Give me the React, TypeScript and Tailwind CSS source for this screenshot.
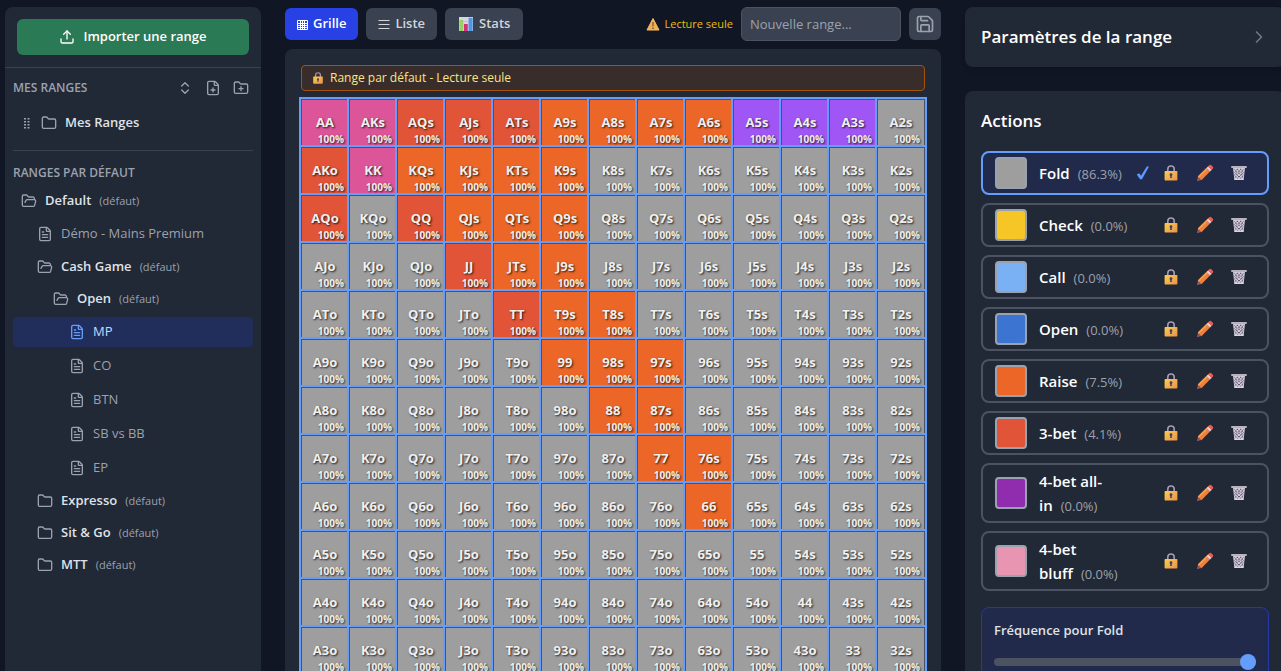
import type { ReactNode } from "react";
import {
    ChevronRight,
    ChevronsUpDown,
    FilePlus,
    FileText,
    Folder,
    FolderOpen,
    FolderPlus,
    Save,
    Upload,
} from "lucide-react";

type TreeItem = {
    name: string;
    level: number;
    kind: "open" | "closed" | "file";
    active?: boolean;
};

type Action = {
    name: string;
    percent: string;
    color: string;
    selected?: boolean;
};

const TREE: TreeItem[] = [
    { name: "Default", level: 0, kind: "open" },
    { name: "Démo - Mains Premium", level: 1, kind: "file" },
    { name: "Cash Game", level: 1, kind: "open" },
    { name: "Open", level: 2, kind: "open" },
    { name: "MP", level: 3, kind: "file", active: true },
    { name: "CO", level: 3, kind: "file" },
    { name: "BTN", level: 3, kind: "file" },
    { name: "SB vs BB", level: 3, kind: "file" },
    { name: "EP", level: 3, kind: "file" },
    { name: "Expresso", level: 1, kind: "closed" },
    { name: "Sit & Go", level: 1, kind: "closed" },
    { name: "MTT", level: 1, kind: "closed" },
];

const INDENT = ["pl-2", "pl-6", "pl-10", "pl-14"];

const ACTIONS: Action[] = [
    { name: "Fold", percent: "86.3%", color: "bg-[#9e9e9e]", selected: true },
    { name: "Check", percent: "0.0%", color: "bg-[#f6c627]" },
    { name: "Call", percent: "0.0%", color: "bg-[#7ab1f5]" },
    { name: "Open", percent: "0.0%", color: "bg-[#3b74d1]" },
    { name: "Raise", percent: "7.5%", color: "bg-[#ec6727]" },
    { name: "3-bet", percent: "4.1%", color: "bg-[#e15438]" },
    { name: "4-bet all-in", percent: "0.0%", color: "bg-[#902daf]" },
    { name: "4-bet bluff", percent: "0.0%", color: "bg-[#e895b2]" },
];

const RANKS = ["A", "K", "Q", "J", "T", "9", "8", "7", "6", "5", "4", "3", "2"];

// One letter per hand: k = 4-bet, t = 3-bet, r = raise, v = call 3-bet, f = fold
const RANGE = [
    "kktttrrrrvvvf",
    "tkrrrrfffffff",
    "tftrrrfffffff",
    "ffftrrfffffff",
    "fffftrrffffff",
    "fffffrrrfffff",
    "ffffffrrfffff",
    "fffffffrrffff",
    "ffffffffrffff",
    "fffffffffffff",
    "fffffffffffff",
    "fffffffffffff",
    "fffffffffffff",
];

const CELL_COLORS: Record<string, string> = {
    k: "bg-[#db5598]",
    t: "bg-[#e15438]",
    r: "bg-[#ec6727]",
    v: "bg-[#a056f5]",
    f: "bg-[#9e9e9e]",
};

function handName(row: number, col: number) {
    if (row === col) return RANKS[row] + RANKS[row];
    return row < col ? `${RANKS[row]}${RANKS[col]}s` : `${RANKS[col]}${RANKS[row]}o`;
}

function LockIcon({ size = 16 }: { size?: number }) {
    return (
        <svg width={size} height={size} viewBox="0 0 16 16" aria-hidden="true" className="shrink-0">
            <defs>
                <linearGradient id="lockBody" x1="0" y1="0" x2="1" y2="1">
                    <stop offset="0" stopColor="#f9cf4f" />
                    <stop offset="1" stopColor="#e9914b" />
                </linearGradient>
            </defs>
            <path d="M4.8 7V4.2a3.2 3.2 0 0 1 6.4 0V7" fill="none" stroke="#a59bb3" strokeWidth="1.6" />
            <rect x="1.6" y="6" width="12.8" height="9.6" rx="0.8" fill="url(#lockBody)" />
            <circle cx="8" cy="9.7" r="1.4" fill="#433b6b" />
            <path d="M7.4 10h1.2l.3 3H7.1z" fill="#433b6b" />
        </svg>
    );
}

function PencilIcon() {
    return (
        <svg width="18" height="18" viewBox="0 0 18 18" aria-hidden="true">
            <path d="M.8 17.2l1.2-4.6 3.4 3.4z" fill="#8a5a66" />
            <path d="M1.8 12.6L10.4 4l3.6 3.6-8.6 8.6z" fill="#ec8040" />
            <path d="M1.8 12.6L10.4 4l1.2 1.2L3 13.8z" fill="#f6a04e" />
            <path d="M10.4 4l1.8-1.8 3.6 3.6L14 7.6z" fill="#ded4e6" />
            <path d="M12 2.4l1.2-1.2a1.4 1.4 0 0 1 2 0l1.6 1.6a1.4 1.4 0 0 1 0 2L15.6 6z" fill="#ee5f51" />
        </svg>
    );
}

function TrashIcon() {
    return (
        <svg width="16" height="16" viewBox="0 0 18 18" aria-hidden="true">
            <path d="M2.2 2.5h13.6l-1.6 14H3.8z" fill="#d2ccda" />
            <path
                d="M4 5l9.5 9M7 4.5l7 6.5M10.5 4.5l4 4M4 8.5l7 7M4.5 12l3.5 3.5M14 5l-9.5 9M11 4.5L4 11M7.5 4.5L4 8M14 8.5l-7 7M13.5 12L10 15.5"
                stroke="#4b4459"
                strokeWidth="1.1"
                strokeDasharray="1.4 1.4"
                fill="none"
            />
            <rect x="0.2" y="1" width="17.6" height="2.4" rx="0.5" fill="#b9b3c0" />
            <rect x="3.8" y="15.3" width="10.4" height="1.5" fill="#ddd8e4" />
        </svg>
    );
}

function CheckIcon() {
    return (
        <svg width="16" height="16" viewBox="0 0 16 16" aria-label="Sélectionné" className="mr-1 shrink-0">
            <path d="M1.8 9.4l2.4-1.2 1.8 2.6L11.8 1.6l2.2-.2L7 14.2H5z" fill="#5b9bff" />
        </svg>
    );
}

function WarningIcon() {
    return (
        <svg width="14" height="14" viewBox="0 0 14 14" aria-hidden="true">
            <path d="M7 1.5L13 13H1z" fill="#f2b04b" stroke="#f5bd62" strokeLinejoin="round" />
            <path d="M6.4 5.2h1.2l-.2 4.3h-.8z" fill="#453c55" />
            <circle cx="7" cy="11.2" r="0.8" fill="#453c55" />
        </svg>
    );
}

function GridIcon() {
    return (
        <svg width="11" height="11" viewBox="0 0 11 11" aria-hidden="true" fill="none" stroke="currentColor">
            <path d="M.5 1.5h10v9H.5zM3.5 1.5v9M5.5 1.5v9M7.5 1.5v9M.5 4.5h10M.5 6.5h10M.5 8.5h10" />
        </svg>
    );
}

function ListIcon() {
    return (
        <svg width="12" height="11" viewBox="0 0 12 11" aria-hidden="true" stroke="currentColor">
            <path d="M.5 1.5h11M.5 5.5h11M.5 9.5h11" />
        </svg>
    );
}

function StatsIcon() {
    return (
        <svg width="16" height="16" viewBox="0 0 16 16" aria-hidden="true">
            <rect x="1" y="1" width="14" height="14" fill="#d9d3e0" />
            <path d="M1 5.5h14M1 10h14" stroke="#bdb5c8" strokeWidth="0.6" />
            <rect x="1.4" y="4" width="3.8" height="11" fill="#94d169" />
            <rect x="6" y="8" width="3.8" height="7" fill="#d5317a" />
            <rect x="10.6" y="1.8" width="4" height="13.2" fill="#4a98e8" />
        </svg>
    );
}

function GripIcon() {
    return (
        <svg width="6" height="11" viewBox="0 0 6 11" aria-hidden="true" fill="currentColor">
            {[0, 3, 6, 9].map((y) => (
                <path key={y} d={`M0 ${y}h2v1.5H0zM3.5 ${y}h2v1.5h-2z`} />
            ))}
        </svg>
    );
}

function IconButton({ label, children }: { label: string; children: ReactNode }) {
    return (
        <button type="button" aria-label={label} className="flex h-8 w-8 items-center justify-center">
            {children}
        </button>
    );
}

function TreeRow({ item }: { item: TreeItem }) {
    if (item.kind === "file") {
        return (
            <button
                type="button"
                className={`flex h-[30px] w-full items-center gap-2 rounded text-[13px] ${INDENT[item.level]} ${
                    item.active ? "bg-[#212d5b] text-[#c3dbfd]" : "text-[#9ba2af]"
                }`}
            >
                <FileText size={16} className={item.active ? "text-[#659dfd]" : ""} />
                {item.name}
            </button>
        );
    }

    const Icon = item.kind === "open" ? FolderOpen : Folder;
    return (
        <button
            type="button"
            className={`flex h-7 w-full items-center gap-2 rounded text-[13px] ${INDENT[item.level]}`}
        >
            <Icon size={16} className="text-[#9ba2af]" />
            <span className="font-semibold text-[#dfe2e7]">{item.name}</span>
            <span className="text-[11px] text-[#9ba2af]">(défaut)</span>
        </button>
    );
}

function Sidebar() {
    return (
        <aside className="w-64 shrink-0 rounded-t-lg bg-[#212836]">
            <div className="border-b border-[#3a4150] p-3">
                <button
                    type="button"
                    className="flex h-9 w-full items-center justify-center gap-2 rounded-md bg-[#2b7a56] text-[13px] font-semibold text-white"
                >
                    <Upload size={16} />
                    Importer une range
                </button>
            </div>

            <div className="px-2">
                <div className="flex h-10 items-center justify-between pr-1">
                    <h2 className="text-[12px] font-semibold text-[#9ba2af]">MES RANGES</h2>
                    <div className="flex gap-3 text-[#9ba2af]">
                        <button type="button" aria-label="Tout déplier">
                            <ChevronsUpDown size={16} />
                        </button>
                        <button type="button" aria-label="Nouvelle range">
                            <FilePlus size={16} />
                        </button>
                        <button type="button" aria-label="Nouveau dossier">
                            <FolderPlus size={16} />
                        </button>
                    </div>
                </div>
                <button type="button" className="flex h-[30px] w-full items-center pl-[11px] text-[13px] text-[#9ba2af]">
                    <GripIcon />
                    <Folder size={16} className="mr-2 ml-[11px]" />
                    <span className="font-semibold text-[#dfe2e7]">Mes Ranges</span>
                </button>

                <hr className="mt-3 border-[#3a4150]" />

                <h2 className="flex h-9 items-center pt-2 text-[12px] font-semibold text-[#9ba2af]">
                    RANGES PAR DÉFAUT
                </h2>
                <nav aria-label="Ranges par défaut" className="flex flex-col gap-1">
                    {TREE.map((item) => (
                        <TreeRow key={item.name} item={item} />
                    ))}
                </nav>
            </div>
        </aside>
    );
}

function Toolbar() {
    const tab = "flex h-8 items-center rounded-md text-[13px] font-semibold";
    return (
        <div className="flex h-[34px] items-center gap-2">
            <button type="button" className={`${tab} gap-[5px] bg-[#2741e4] px-3 text-white`}>
                <GridIcon />
                Grille
            </button>
            <button type="button" className={`${tab} gap-[5px] bg-[#3a4150] px-3 text-[#d2d6dc]`}>
                <ListIcon />
                Liste
            </button>
            <button type="button" className={`${tab} gap-[5px] bg-[#3a4150] px-[13px] text-[#d2d6dc]`}>
                <StatsIcon />
                Stats
            </button>
            <span className="ml-auto flex items-center gap-1 text-[11px] text-[#eebc0c]">
                <WarningIcon />
                Lecture seule
            </span>
            <input
                type="text"
                aria-label="Nom de la range"
                placeholder="Nouvelle range..."
                className="h-[34px] w-40 rounded-md border border-[#4b5362] bg-[#3a4150] px-2 text-[13px] text-white placeholder:text-[#9ba2af]"
            />
            <button
                type="button"
                aria-label="Enregistrer"
                className="flex h-8 w-8 items-center justify-center rounded-md bg-[#3a4150] text-[#9ba2af]"
            >
                <Save size={20} />
            </button>
        </div>
    );
}

function RangeGrid() {
    return (
        <div className="grid grid-cols-13">
            {RANGE.map((line, row) =>
                line.split("").map((code, col) => (
                    <div
                        key={handName(row, col)}
                        className={`relative flex aspect-square items-center justify-center border border-[#4b5362] text-[13px] font-bold text-[#f0f0f0] ring-2 ring-[#659dfd] text-shadow-[1px_1px_2px_rgb(0_0_0_/_0.8)] ${CELL_COLORS[code]}`}
                    >
                        {handName(row, col)}
                        <span className="absolute right-1 bottom-0 text-[10px] leading-[13px]">100%</span>
                    </div>
                )),
            )}
        </div>
    );
}

function ActionRow({ action }: { action: Action }) {
    return (
        <li
            className={`flex items-center rounded-lg border-2 px-3 py-1 ${
                action.selected ? "border-[#659dfd] bg-[#212a4b]" : "border-[#4b5362]"
            }`}
        >
            <span className={`h-8 w-8 shrink-0 rounded border-2 border-[#9ba2af] ${action.color}`} />
            <span className="ml-3 min-w-0 flex-1 text-[15px] leading-6 font-semibold text-white">
                {action.name}
                <span className="ml-2 text-[13px] leading-none font-normal text-[#9ba2af]">({action.percent})</span>
            </span>
            {action.selected && <CheckIcon />}
            <span className="flex gap-0.5">
                <IconButton label={`Verrouiller ${action.name}`}>
                    <LockIcon />
                </IconButton>
                <IconButton label={`Modifier ${action.name}`}>
                    <PencilIcon />
                </IconButton>
                <IconButton label={`Supprimer ${action.name}`}>
                    <TrashIcon />
                </IconButton>
            </span>
        </li>
    );
}

function ActionsPanel() {
    return (
        <section className="flex-1 rounded-t-lg bg-[#212836] p-4">
            <h2 className="mb-4 text-[17px] leading-7 font-semibold text-white">Actions</h2>
            <ul className="space-y-2">
                {ACTIONS.map((action) => (
                    <ActionRow key={action.name} action={action} />
                ))}
            </ul>
            <div className="mt-4 rounded-lg border border-[#2638a5] bg-[#212a4b] p-3">
                <label htmlFor="frequency" className="block text-[13px] leading-5 font-semibold text-[#dfe2e7]">
                    Fréquence pour Fold
                </label>
                <input
                    id="frequency"
                    type="range"
                    min={0}
                    max={100}
                    defaultValue={100}
                    className="mt-[18px] block h-2 w-full appearance-none rounded-full bg-[#4b5362] [&::-webkit-slider-thumb]:h-4 [&::-webkit-slider-thumb]:w-4 [&::-webkit-slider-thumb]:appearance-none [&::-webkit-slider-thumb]:rounded-full [&::-webkit-slider-thumb]:bg-[#659dfd]"
                />
            </div>
        </section>
    );
}

export default function App() {
    return (
        <div className="h-screen overflow-hidden bg-[#111625] font-['Open_Sans','Noto_Sans',sans-serif]">
            <div className="-mr-1 flex h-full gap-6 pt-[7px] pl-[5px]">
                <Sidebar />

                <main className="flex min-w-0 flex-1 flex-col gap-2">
                    <Toolbar />
                    <div className="flex-1 rounded-lg bg-[#212836] p-4">
                        <div className="mb-2 flex h-[26px] items-center gap-1.5 rounded border border-[#a65308] bg-[#392d2b] px-2.5 text-[12px] text-[#fbe685]">
                            <LockIcon size={12} />
                            Range par défaut - Lecture seule
                        </div>
                        <RangeGrid />
                    </div>
                </main>

                <div className="flex w-80 shrink-0 flex-col gap-6">
                    <button
                        type="button"
                        className="flex h-[60px] shrink-0 items-center justify-between rounded-lg bg-[#212836] px-4 text-[17px] font-semibold text-white shadow-md"
                    >
                        Paramètres de la range
                        <ChevronRight size={20} className="text-[#6f7785]" />
                    </button>
                    <ActionsPanel />
                </div>
            </div>
        </div>
    );
}
